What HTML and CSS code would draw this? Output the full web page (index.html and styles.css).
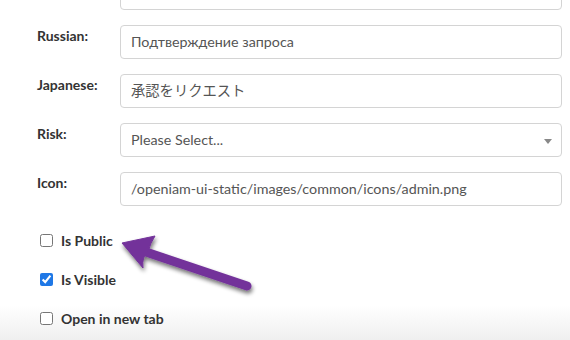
FILE: index.html
```html
<!DOCTYPE html>
<html>
<head>
<meta charset="utf-8">
<link rel="stylesheet" href="styles.css">
</head>
<body>
<div class="form">
  <div class="row">
    <label class="label">French:</label>
    <div class="field">Demande d'approbation</div>
  </div>
  <div class="row">
    <label class="label">Russian:</label>
    <div class="field">Подтверждение запроса</div>
  </div>
  <div class="row">
    <label class="label">Japanese:</label>
    <div class="field">承認をリクエスト</div>
  </div>
  <div class="row">
    <label class="label">Risk:</label>
    <div class="field select">Please Select...<span class="caret"></span></div>
  </div>
  <div class="row">
    <label class="label">Icon:</label>
    <div class="field">/openiam-ui-static/images/common/icons/admin.png</div>
  </div>
  <div class="checks">
    <label class="check"><input type="checkbox"><span>Is Public</span></label>
    <label class="check"><input type="checkbox" checked><span>Is Visible</span></label>
    <label class="check"><input type="checkbox"><span>Open in new tab</span></label>
  </div>
</div>
<svg class="arrow" width="570" height="340" viewBox="0 0 570 340">
  <defs>
    <filter id="sh" x="-20%" y="-20%" width="140%" height="160%">
      <feGaussianBlur in="SourceAlpha" stdDeviation="2"/>
      <feOffset dx="1" dy="3" result="b"/>
      <feComponentTransfer><feFuncA type="linear" slope="0.55"/></feComponentTransfer>
      <feMerge><feMergeNode/><feMergeNode in="SourceGraphic"/></feMerge>
    </filter>
  </defs>
  <g filter="url(#sh)" fill="#73339a" stroke="#73339a">
    <line x1="140" y1="250" x2="247" y2="286" stroke-width="9" stroke-linecap="round"/>
    <path d="M122,243 L155,236 Q150,244 149,249 L144,257 Q142,262 143,268 Z" stroke-width="1" stroke-linejoin="round"/>
  </g>
</svg>
</body>
</html>
```

FILE: styles.css
```css
html, body {
  margin: 0;
  padding: 0;
}
body {
  width: 570px;
  height: 340px;
  overflow: hidden;
  position: relative;
  font-family: "Lato", "Noto Sans CJK JP", sans-serif;
  background: linear-gradient(to bottom, #ffffff 0, #ffffff 306px, #fcfcfc 312px, #efefef 340px);
}
.form {
  margin-top: -24px;
  padding-left: 37px;
  padding-right: 8px;
}
.row {
  display: flex;
  height: 34px;
  margin-bottom: 15px;
}
.label {
  width: 83px;
  flex: none;
  font-weight: 700;
  font-size: 14px;
  line-height: 18px;
  color: #333;
  padding-top: 2px;
}
.field {
  flex: 1;
  box-sizing: border-box;
  height: 34px;
  border: 1px solid #d4d4d4;
  border-radius: 4px;
  background: #fff;
  padding: 0 10px;
  font-size: 14.3px;
  line-height: 32px;
  color: #555;
  white-space: nowrap;
  overflow: hidden;
  position: relative;
}
.select .caret {
  position: absolute;
  right: 9px;
  top: 15px;
  width: 0;
  height: 0;
  border-left: 4px solid transparent;
  border-right: 4px solid transparent;
  border-top: 5px solid #888;
}
.checks {
  display: flex;
  flex-direction: column;
  gap: 20px;
  padding-top: 10px;
  padding-left: 3px;
}
.check {
  display: flex;
  align-items: center;
  height: 19px;
  font-weight: 700;
  font-size: 14px;
  color: #333;
}
.check input {
  margin: 0 8px 0 0;
  width: 13px;
  height: 13px;
  accent-color: #1f78e6;
}
.arrow {
  position: absolute;
  left: 0;
  top: 0;
  pointer-events: none;
}
```
